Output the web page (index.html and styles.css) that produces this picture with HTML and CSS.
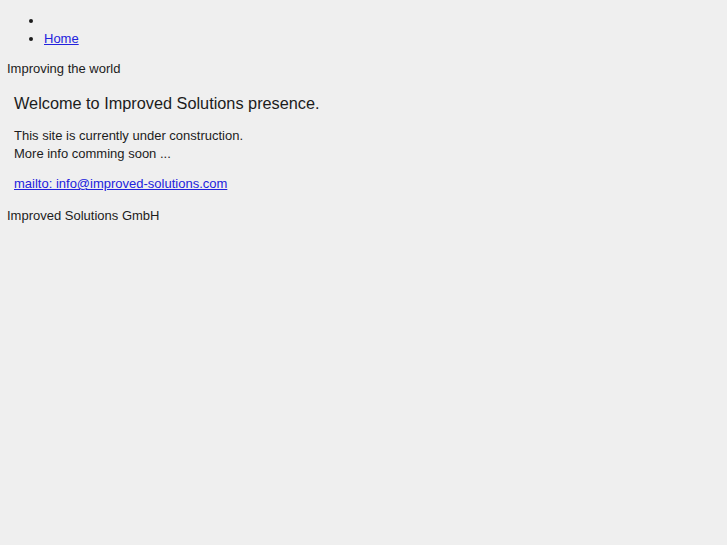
FILE: index.html
```html
<!DOCTYPE html>
<html>
<head>
<meta charset="utf-8">
<title>Improved Solutions</title>
<link rel="stylesheet" href="styles.css">
</head>
<body>
<ul class="nav">
<li></li>
<li><a href="#">Home</a></li>
</ul>
<div class="tagline">Improving the world</div>
<div class="content">
<h1 class="title">Welcome to Improved Solutions presence.</h1>
<p class="text">This site is currently under construction.<br>More info comming soon ...</p>
<p class="mail"><a href="mailto:info@improved-solutions.com">mailto: info@improved-solutions.com</a></p>
</div>
<div class="footer">Improved Solutions GmbH</div>
</body>
</html>
```
FILE: styles.css
```css
html { background: #efefef; }
body {
  margin: 0;
  padding: 12px 7px 0 7px;
  font-family: "Liberation Sans", Arial, sans-serif;
  font-size: 13px;
  line-height: 18px;
  color: #1c1c1c;
  background: #efefef;
}
a { color: #2222dd; }
.nav {
  margin: 0;
  padding: 0 0 0 37px;
}
.tagline { margin-top: 12px; }
.content { padding-left: 7px; }
.title {
  margin: 15px 0 0 0;
  font-size: 16.3px;
  line-height: 20px;
  font-weight: normal;
}
.text { margin: 14px 0 0 0; }
.mail { margin: 12px 0 0 0; }
.footer { margin-top: 14px; }
```
